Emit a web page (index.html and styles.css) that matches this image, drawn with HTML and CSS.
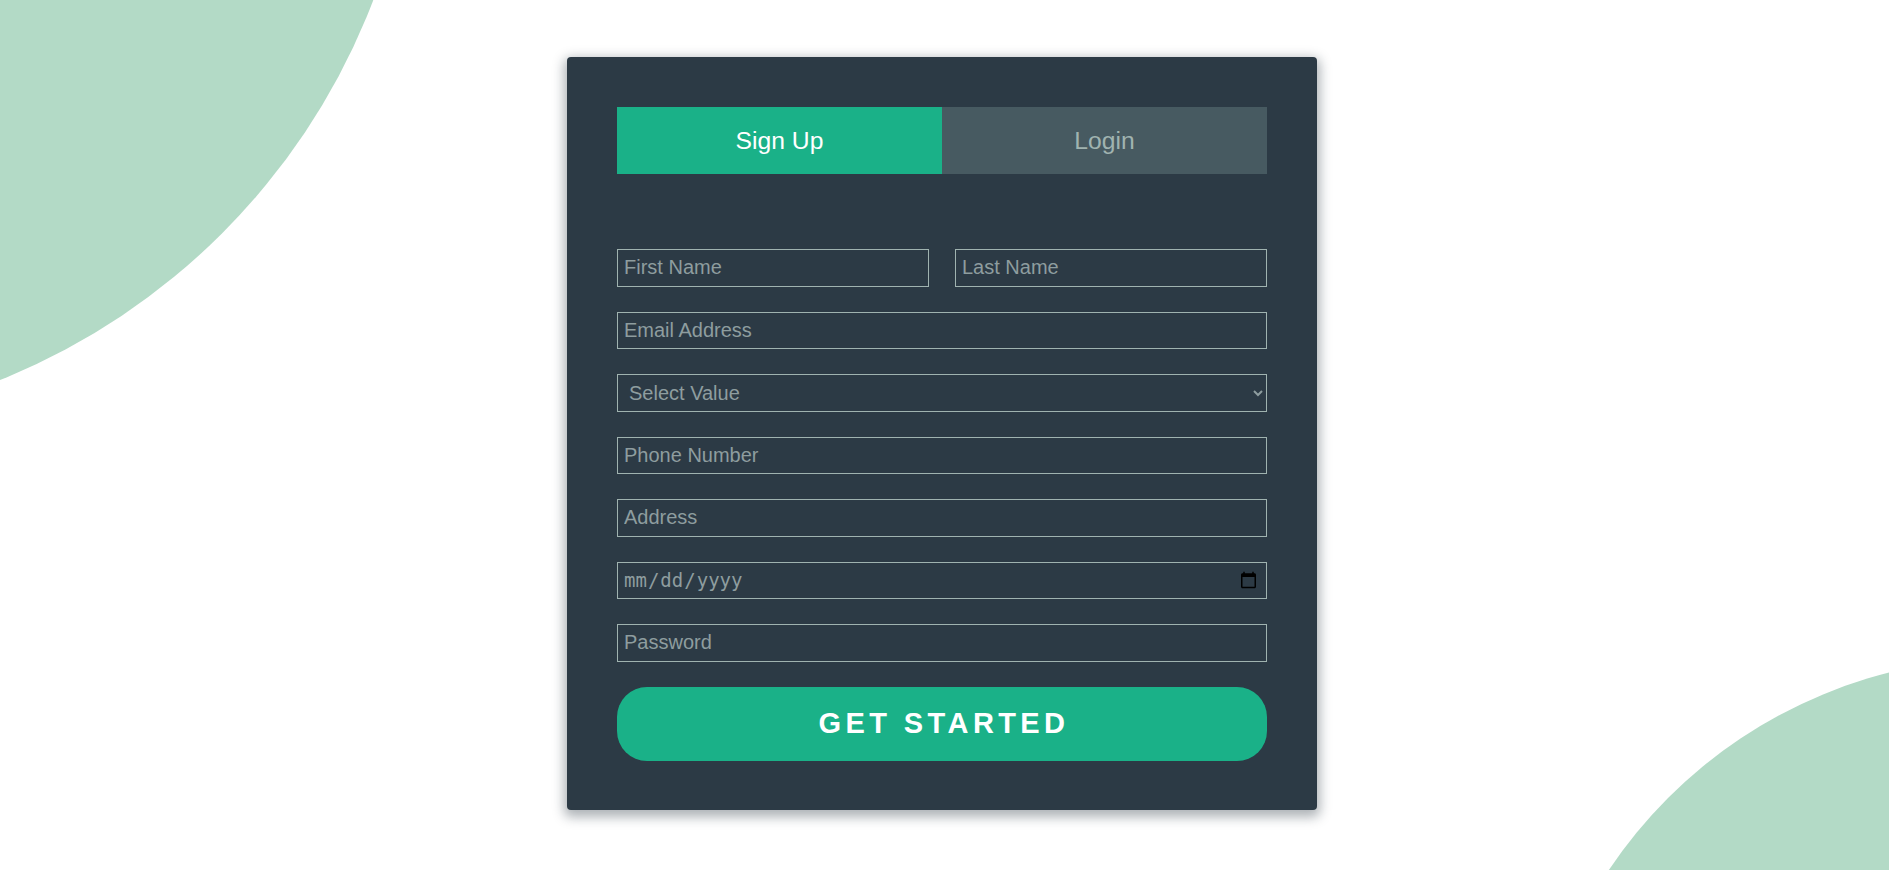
FILE: index.html
```html
<!DOCTYPE html>
<html lang="en">
<head>
<meta charset="utf-8">
<title>Sign Up</title>
<link rel="stylesheet" href="styles.css">
</head>
<body>
<div class="backdrop">
  <div class="blob blob-tl"></div>
  <div class="blob blob-br"></div>
</div>
<main class="page">
  <section class="card">
    <div class="tabs">
      <a class="tab tab-active" href="#">Sign Up</a>
      <a class="tab" href="#">Login</a>
    </div>
    <form class="form">
      <div class="row">
        <input class="field half" type="text" placeholder="First Name">
        <input class="field half" type="text" placeholder="Last Name">
      </div>
      <input class="field" type="email" placeholder="Email Address">
      <select class="field select">
        <option>Select Value</option>
      </select>
      <input class="field" type="tel" placeholder="Phone Number">
      <input class="field" type="text" placeholder="Address">
      <input class="field date" type="date">
      <input class="field" type="password" placeholder="Password">
      <button class="button" type="button">Get Started</button>
    </form>
  </section>
</main>
</body>
</html>
```
FILE: styles.css
```css
html, body {
  margin: 0;
  padding: 0;
}
body {
  background: #ffffff;
  font-family: "Liberation Sans", Arial, sans-serif;
  height: 870px;
  overflow: hidden;
  position: relative;
}
.backdrop {
  position: absolute;
  inset: 0;
  overflow: hidden;
  z-index: 0;
}
.blob {
  position: absolute;
  border-radius: 50%;
  background: #b3dac6;
}
.blob-tl {
  width: 1330px;
  height: 1330px;
  left: -913px;
  top: -902px;
}
.blob-br {
  width: 956px;
  height: 956px;
  left: 1528px;
  top: 658px;
}
.page {
  position: relative;
  z-index: 1;
  display: flex;
  justify-content: center;
  padding: 57px 5px 0 0;
}
.card {
  width: 750px;
  box-sizing: border-box;
  padding: 50px 50px 49px;
  background: #2c3a45;
  border-radius: 4px;
  box-shadow: 0 4px 12px 3px rgba(19, 35, 47, 0.35);
}
.tabs {
  display: flex;
  height: 67px;
}
.tab {
  flex: 1;
  display: flex;
  align-items: center;
  justify-content: center;
  font-size: 24.7px;
  text-decoration: none;
  background: #475a61;
  color: #a0b3b0;
}
.tab-active {
  background: #1ab188;
  color: #ffffff;
}
.form {
  display: flex;
  flex-direction: column;
  padding-top: 75px;
}
.row {
  display: flex;
  justify-content: space-between;
}
.field {
  display: block;
  box-sizing: border-box;
  width: 100%;
  height: 37.5px;
  margin: 0 0 25px;
  padding: 0 6px;
  border: 1px solid #a0b3b0;
  border-radius: 0;
  background: transparent;
  color: #ffffff;
  font-family: "Liberation Sans", Arial, sans-serif;
  font-size: 20px;
  outline: none;
}
.field::placeholder {
  color: #8e9d9f;
}
.half {
  width: 312px;
}
.select {
  color: #8e9d9f;
  padding: 0 4px 0 7px;
  font-size: 20px;
}
.select option {
  color: #2c3a45;
}
.date {
  color: #8e9d9f;
  font-family: "DejaVu Sans Mono", "Liberation Mono", monospace;
  font-size: 19px;
  padding: 0 6px 0 5px;
}
.button {
  display: block;
  width: 100%;
  height: 74px;
  margin: 0;
  border: 0;
  border-radius: 30px;
  background: #1ab188;
  color: #ffffff;
  font-family: "Liberation Sans", Arial, sans-serif;
  font-size: 29px;
  font-weight: bold;
  letter-spacing: 4.4px;
  text-transform: uppercase;
  padding: 0 0 0 4px;
  cursor: pointer;
}
```
